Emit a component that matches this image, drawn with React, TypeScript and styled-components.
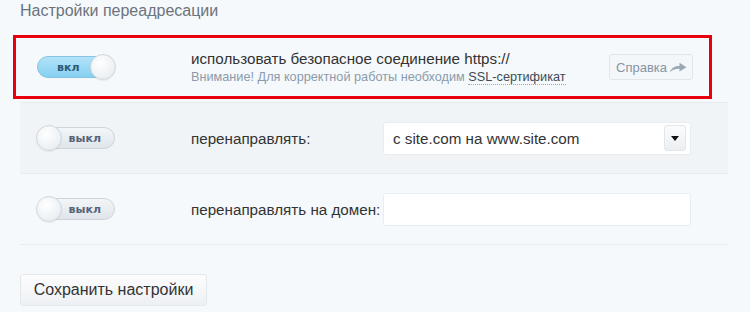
import React from "react";
import styled, { createGlobalStyle } from "styled-components";

const Global = createGlobalStyle`
  html, body { margin: 0; padding: 0; }
  body {
    background: #f6f9fb;
    font-family: "Liberation Sans", Arial, sans-serif;
    width: 750px;
    height: 312px;
    overflow: hidden;
  }
`;

const Page = styled.div`
  padding: 0 22px 0 20px;
`;

const Title = styled.div`
  display: flex;
  align-items: center;
  margin-top: -10px;
  font-size: 16px;
  color: #6b737d;
  line-height: 22px;
  height: 42px;
`;

const Rows = styled.div`
  width: 708px;
`;

const Row = styled.div<{ $shade?: boolean }>`
  position: relative;
  height: 71px;
  display: grid;
  grid-template-columns: 154px 192px 1fr;
  align-items: center;
  padding-left: 17px;
  box-sizing: border-box;
  background: ${(p) => (p.$shade ? "#f0f4f7" : "#f6f9fb")};
  border-bottom: 1px solid #e7ecf0;
`;

const Highlight = styled.div`
  position: absolute;
  left: -7px;
  right: 16px;
  top: 3px;
  bottom: 3px;
  border: 3px solid #e8000c;
  pointer-events: none;
`;

const Track = styled.div<{ $on?: boolean }>`
  position: relative;
  width: 78px;
  height: 22px;
  border-radius: 12px;
  box-sizing: border-box;
  border: 1px solid ${(p) => (p.$on ? "#86c4e2" : "#ccd5dc")};
  background: ${(p) =>
    p.$on
      ? "linear-gradient(#b3e3f8, #86d0f2)"
      : "linear-gradient(#f3f6f8, #dfe5ea)"};
  display: flex;
  align-items: center;
  justify-content: ${(p) => (p.$on ? "flex-start" : "flex-end")};
  padding-left: ${(p) => (p.$on ? "19px" : "0")};
  padding-right: ${(p) => (p.$on ? "0" : "13px")};
`;

const TrackLabel = styled.span<{ $on?: boolean }>`
  font-family: "DejaVu Sans", Verdana, sans-serif;
  font-weight: bold;
  font-size: 11px;
  color: ${(p) => (p.$on ? "#2c5a78" : "#56647a")};
`;

const Knob = styled.span<{ $on?: boolean }>`
  position: absolute;
  top: -3px;
  ${(p) => (p.$on ? "right: -2px;" : "left: -2px;")}
  width: 26px;
  height: 26px;
  border-radius: 50%;
  box-sizing: border-box;
  border: 1px solid #cfd7dd;
  background: radial-gradient(circle at 40% 35%, #ffffff 0%, #eef2f5 60%, #dde4e9 100%);
  box-shadow: 0 1px 1px rgba(0, 0, 0, 0.06);
`;

const Toggle = ({ on }: { on?: boolean }) => (
  <Track $on={on}>
    <TrackLabel $on={on}>{on ? "вкл" : "выкл"}</TrackLabel>
    <Knob $on={on} />
  </Track>
);

const Label = styled.div`
  font-size: 15.2px;
  color: #333;
`;

const Main = styled.div`
  grid-column: 2 / 4;
  display: flex;
  align-items: center;
  justify-content: space-between;
  padding-right: 35px;
`;

const Texts = styled.div`
  display: flex;
  flex-direction: column;
  gap: 3px;
`;

const Hint = styled.div`
  font-size: 12.7px;
  color: #8a9bab;
`;

const Link = styled.span`
  color: #3e4a56;
  border-bottom: 1px dotted #9aa7b2;
`;

const HelpButton = styled.div`
  display: flex;
  align-items: center;
  justify-content: space-between;
  height: 26px;
  padding: 0 5px 0 6px;
  box-sizing: border-box;
  width: 84px;
  border: 1px solid #dfe5ea;
  border-radius: 3px;
  background: #f4f7f9;
  font-size: 13px;
  color: #8494a4;
`;

const Field = styled.div`
  width: 308px;
  height: 33px;
  box-sizing: border-box;
  background: #fff;
  border: 1px solid #e8edf1;
  border-radius: 3px;
  display: flex;
  align-items: center;
  justify-content: space-between;
  padding: 0 4px 0 9px;
  font-size: 15.2px;
  color: #333;
`;

const Caret = styled.div`
  width: 22px;
  height: 26px;
  box-sizing: border-box;
  border: 1px solid #e2e7eb;
  border-radius: 3px;
  background: linear-gradient(#fbfcfd, #eceff2);
  display: flex;
  align-items: center;
  justify-content: center;
`;

const Footer = styled.div`
  padding-top: 29px;
`;

const SaveButton = styled.button`
  width: 187px;
  height: 32px;
  border: 1px solid #e3e8ec;
  border-radius: 3px;
  background: linear-gradient(#fdfdfe, #edf0f3);
  font-family: "Liberation Sans", Arial, sans-serif;
  font-size: 16px;
  color: #333;
  padding: 0;
  cursor: pointer;
`;

export default function App() {
  return (
    <>
      <Global />
      <Page>
        <Title>Настройки переадресации</Title>
        <Rows>
          <Row>
            <Toggle on />
            <Main>
              <Texts>
                <Label>использовать безопасное соединение https://</Label>
                <Hint>
                  Внимание! Для корректной работы необходим <Link>SSL-сертификат</Link>
                </Hint>
              </Texts>
              <HelpButton>
                Справка
                <svg width="18" height="11" viewBox="0 0 18 11">
                  <path
                    d="M0.5 10.5 C2.5 5.5 6 4 10.5 4 L10.5 0.8 L17.5 5.2 L10.5 9.6 L10.5 6.8 C6.5 6.6 3 7.8 0.5 10.5 Z"
                    fill="#9aa8b5"
                  />
                </svg>
              </HelpButton>
            </Main>
            <Highlight />
          </Row>
          <Row $shade>
            <Toggle />
            <Label>перенаправлять:</Label>
            <Field>
              с site.com на www.site.com
              <Caret>
                <svg width="8" height="5" viewBox="0 0 8 5">
                  <path d="M0 0 H8 L4 5 Z" fill="#111" />
                </svg>
              </Caret>
            </Field>
          </Row>
          <Row>
            <Toggle />
            <Label>перенаправлять на домен:</Label>
            <Field />
          </Row>
        </Rows>
        <Footer>
          <SaveButton>Сохранить настройки</SaveButton>
        </Footer>
      </Page>
    </>
  );
}
